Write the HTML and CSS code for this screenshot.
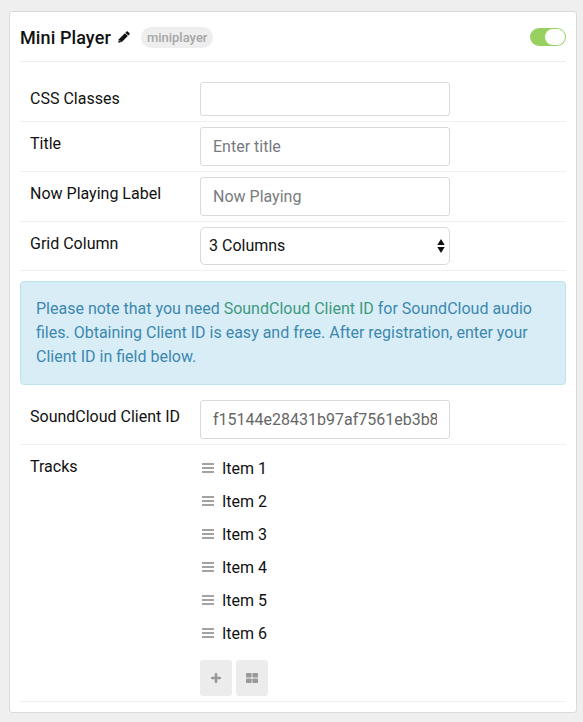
FILE: index.html
```html
<!DOCTYPE html>
<html lang="en">
<head>
<meta charset="utf-8">
<title>Mini Player</title>
<link rel="stylesheet" href="styles.css">
</head>
<body>
<main class="card">
  <header class="head">
    <h1 class="title">Mini Player</h1>
    <svg class="pencil" width="12" height="12" viewBox="0 0 12 12"><path d="M0.2 11.8L0.9 8.2L6.9 2.2L9.8 5.1L3.8 11.1Z" fill="#111"/><path d="M7.4 1.7L8.6.5Q9.2 0 9.8.5L11.5 2.2Q12 2.8 11.5 3.4L10.3 4.6Z" fill="#111"/><path d="M1.6 9.4L2.6 10.4" stroke="#fff" stroke-width=".8"/></svg>
    <span class="badge">miniplayer</span>
    <span class="switch"><span class="knob"></span></span>
  </header>
  <div class="row"><label class="label">CSS Classes</label><input class="field short" type="text"></div>
  <div class="row"><label class="label">Title</label><input class="field" type="text" placeholder="Enter title"></div>
  <div class="row"><label class="label">Now Playing Label</label><input class="field" type="text" placeholder="Now Playing"></div>
  <div class="row"><label class="label">Grid Column</label>
    <div class="select"><span>3 Columns</span><svg width="8" height="14" viewBox="0 0 8 14"><path d="M4 0L7.7 6H.3ZM4 14L7.7 8H.3Z" fill="#111"/></svg></div>
  </div>
  <p class="alert">Please note that you need <a class="link">SoundCloud Client ID</a> for SoundCloud audio files. Obtaining Client ID is easy and free. After registration, enter your Client ID in field below.</p>
  <div class="row"><label class="label">SoundCloud Client ID</label><input class="field" type="text" value="f15144e28431b97af7561eb3b8"></div>
  <div class="row">
    <label class="label">Tracks</label>
    <div class="tracks">
      <ul class="list">
        <li class="item"><span class="grip"></span>Item 1</li>
        <li class="item"><span class="grip"></span>Item 2</li>
        <li class="item"><span class="grip"></span>Item 3</li>
        <li class="item"><span class="grip"></span>Item 4</li>
        <li class="item"><span class="grip"></span>Item 5</li>
        <li class="item"><span class="grip"></span>Item 6</li>
      </ul>
      <div class="buttons">
        <button class="btn" aria-label="Add"><svg width="10" height="10" viewBox="0 0 10 10"><path d="M5 1.2V8.8M1.2 5H8.8" stroke="#999" stroke-width="2.6" stroke-linecap="round"/></svg></button>
        <button class="btn" aria-label="Grid"><svg width="12" height="10" viewBox="0 0 12 10" fill="#999"><rect width="5.6" height="4.6" rx=".8"/><rect x="6.4" width="5.6" height="4.6" rx=".8"/><rect y="5.4" width="5.6" height="4.6" rx=".8"/><rect x="6.4" y="5.4" width="5.6" height="4.6" rx=".8"/></svg></button>
      </div>
    </div>
  </div>
</main>
</body>
</html>
```
FILE: styles.css
```css
* { box-sizing: border-box; }
body {
  margin: 0;
  padding: 11px 6px 9px 9px;
  background: #efefef;
  color: #111;
  font: 16px/24px Roboto, sans-serif;
}
.card {
  height: 702px;
  padding: 0 10px;
  background: #fff;
  border: 1px solid #dadada;
  border-radius: 3px;
}
.head {
  display: flex;
  align-items: center;
  height: 50px;
  padding-top: 1px;
  margin-bottom: 15px;
  border-bottom: 1px solid #ececec;
}
.title { margin: 1px 7px 0 0; font-size: 18px; font-weight: 500; line-height: 24px; letter-spacing: .1px; }
.pencil { margin-right: 11px; }
.badge {
  height: 21px;
  margin-top: 1px;
  padding: 0 6px;
  border-radius: 11px;
  background: #eee;
  color: #a6a6a6;
  font-size: 13px;
  font-weight: 500;
  line-height: 21px;
}
.switch {
  width: 36px;
  height: 18px;
  margin-left: auto;
  padding: 1px;
  border-radius: 9px;
  background: #99d160;
}
.knob {
  display: block;
  width: 20px;
  height: 16px;
  margin-left: auto;
  border-radius: 8px;
  background: #fff;
}
.row {
  display: flex;
  align-items: flex-start;
  padding: 5px 0 5px 10px;
  border-bottom: 1px solid #f0f0f0;
}
.label { width: 170px; padding-top: 5px; }
.field, .select {
  width: 250px;
  height: 39px;
  padding: 0 12px;
  border: 1px solid #d9d9d9;
  border-radius: 3px;
  background: #fff;
  color: #666;
  font: inherit;
}
.field::placeholder { color: #777b80; opacity: 1; }
.short { height: 34px; }
.select {
  display: flex;
  align-items: center;
  justify-content: space-between;
  height: 38px;
  padding: 0 4px 0 8px;
  border-radius: 5px;
  color: #111;
}
.alert {
  height: 104px;
  margin: 10px 0;
  padding: 15px;
  border: 1px solid #bce3eb;
  border-radius: 4px;
  background: #d9edf6;
  color: #3c88b0;
}
.link { color: #3f9a80; }
.tracks { padding-top: 2px; }
.list { margin: 0; padding: 0; list-style: none; }
.item { display: flex; align-items: center; height: 33px; }
.grip {
  width: 12px;
  height: 10px;
  margin: 0 8px 1px 2px;
  border: solid #a3a3a3;
  border-width: 2px 0;
  background: linear-gradient(#a3a3a3, #a3a3a3) center / 100% 2px no-repeat;
}
.buttons { display: flex; gap: 4px; margin-top: 10px; }
.btn {
  display: flex;
  align-items: center;
  justify-content: center;
  width: 32px;
  height: 36px;
  padding: 0;
  border: 0;
  border-radius: 3px;
  background: #ececec;
}
```
